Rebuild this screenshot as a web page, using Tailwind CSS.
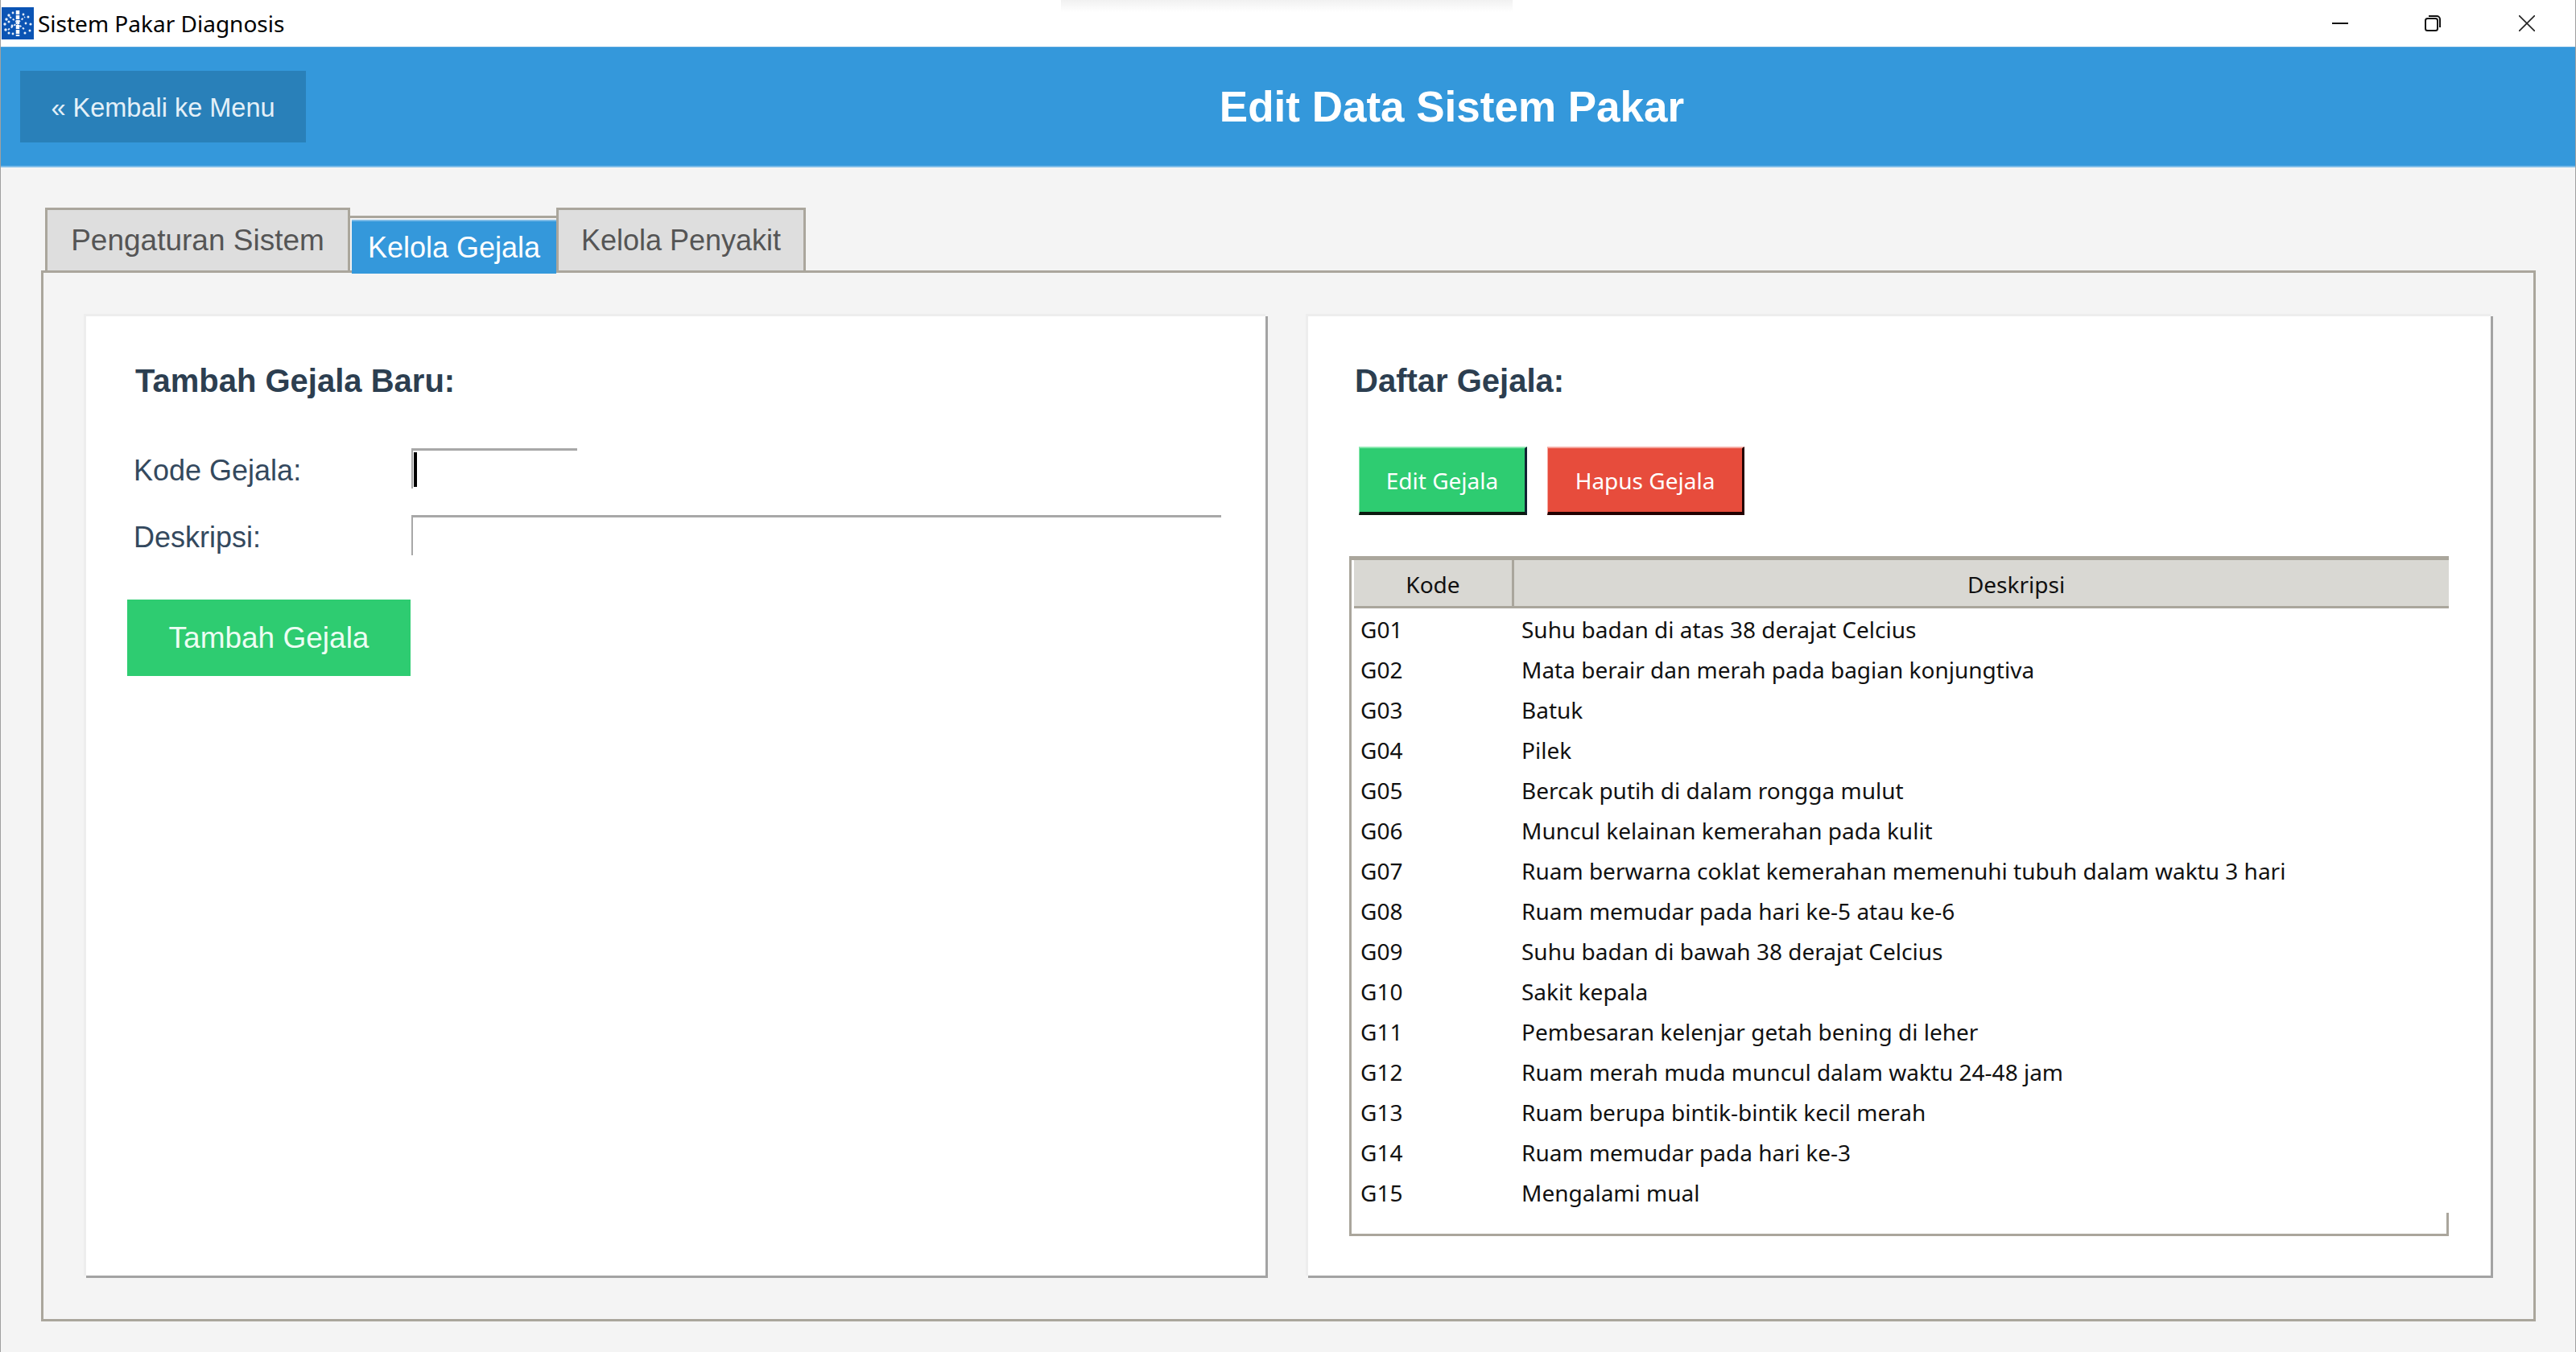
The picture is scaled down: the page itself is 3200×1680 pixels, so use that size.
<!DOCTYPE html>
<html lang="en">
<head>
    <meta charset="UTF-8">
    <title>Sistem Pakar Diagnosis</title>
    <script src="https://cdn.jsdelivr.net/npm/@tailwindcss/browser@4"></script>
</head>
<body class="bg-[#f4f4f4] font-['Liberation_Sans',sans-serif]">
<div class="relative w-[3200px] h-[1680px] overflow-hidden border-x border-[#a0a0a0] flex flex-col">

    <!-- title bar -->
    <div class="h-[58px] shrink-0 bg-white flex items-center font-['Noto_Sans',sans-serif]">
        <svg class="ml-[1px] w-[40px] h-[40px] mb-[1px]" viewBox="0 0 40 40">
            <rect width="40" height="40" fill="#0b54b4"/>
            <path d="M20 4v32" stroke="#fff" stroke-width="4.5" fill="none" stroke-dasharray="5 1"/>
            <path d="M10 12l10 7 9-7M8 28l11-8 10 8" stroke="#dfe9f8" stroke-width="2" fill="none" stroke-dasharray="2.5 2"/>
            <g fill="#e8f0fb">
                <circle cx="6" cy="15" r="1.7"/><circle cx="9" cy="10" r="1.7"/><circle cx="14" cy="7" r="1.4"/><circle cx="4" cy="21" r="1.7"/>
                <circle cx="9" cy="18" r="1.5"/><circle cx="5" cy="28" r="1.7"/><circle cx="9" cy="32" r="1.5"/><circle cx="14" cy="33" r="1.4"/>
                <circle cx="27" cy="9" r="1.4"/><circle cx="33" cy="12" r="1.5"/><circle cx="36" cy="21" r="1.6"/><circle cx="30" cy="20" r="1.4"/>
                <circle cx="35" cy="29" r="1.5"/><circle cx="29" cy="32" r="1.5"/><circle cx="13" cy="23" r="1.4"/>
            </g>
        </svg>
        <span class="ml-[5px] text-[28px] text-black leading-none mb-[1px]">Sistem Pakar Diagnosis</span>
        <div class="ml-auto flex items-center pr-[50px]">
            <svg class="w-[20px] h-[20px]" viewBox="0 0 20 20"><path d="M0 10h20" stroke="#111" stroke-width="2"/></svg>
            <svg class="ml-[95px] w-[20px] h-[20px]" viewBox="0 0 20 20" fill="none" stroke="#111" stroke-width="2"><rect x="1" y="4" width="15" height="15" rx="2.5"/><path d="M5 1h10a4 4 0 0 1 4 4v10"/></svg>
            <svg class="ml-[97px] w-[20px] h-[20px]" viewBox="0 0 20 20"><path d="M0 0l20 20M20 0L0 20" stroke="#222" stroke-width="1.6"/></svg>
        </div>
    </div>

    <!-- window shadow leaking from top -->
    <div class="absolute left-[1317px] top-0 w-[561px] h-[15px] bg-gradient-to-b from-[#f1f1f1] to-white"></div>

    <!-- header -->
    <div class="h-[150px] shrink-0 bg-[#3498db] border-t border-b-2 border-t-[#5aa6de] border-b-[#7dbce8] flex items-center pl-[24px]">
        <a class="w-[355px] h-[89px] bg-[#2980b9] text-[#e4f0f8] text-[32.5px] pt-[3px] flex items-center justify-center">« Kembali ke Menu</a>
        <h1 class="flex-1 pl-[28px] text-center text-white font-bold text-[53px]">Edit Data Sistem Pakar</h1>
    </div>

    <!-- tabs -->
    <div class="flex-1 pt-[50px] pl-[50px] pr-[50px]">
        <div class="flex items-start h-[78px] pl-[5px] text-[36px]">
            <div class="w-[379px] h-[78px] bg-[#dedede] border-x-3 border-t-3 border-[#aaa69c] text-[#555] text-[37px] flex items-center justify-center">Pengaturan Sistem</div>
            <div class="relative z-10 w-[256px] h-[82px] pt-[10px]">
                <div class="border-t-3 border-[#aaa69c] h-[5px]"></div>
                <div class="ml-[2px] h-[67px] bg-[#3498db] border-t-2 border-[#7dbce8] text-white flex items-center justify-center">Kelola Gejala</div>
            </div>
            <div class="w-[310px] h-[78px] bg-[#dedede] border-x-3 border-t-3 border-[#aaa69c] text-[#555] flex items-center justify-center">Kelola Penyakit</div>
        </div>

        <!-- pane -->
        <div class="w-[3099px] h-[1306px] border-3 border-[#aaa69c] pt-[51px] pl-[50px] flex">
            <!-- left card -->
            <div class="w-[1468px] h-[1195px] bg-white border-l-3 border-t-3 border-[#ededed] shadow-[3px_3px_0_#a3a3a3] pl-[61px] pt-[57px] text-[#34495e]">
                <h2 class="font-bold text-[40px] text-[#2c3e50] leading-[46px]">Tambah Gejala Baru:</h2>
                <div class="mt-[61px] -ml-[2px] flex items-center h-[50px]">
                    <span class="w-[345px] text-[36px] pt-[6px]">Kode Gejala:</span>
                    <div class="w-[206px] h-[50px] border-t-3 border-l-2 border-[#a8a8a8] pl-[1px] pt-[2px]">
                        <div class="w-[4px] h-[43px] bg-black"></div>
                    </div>
                </div>
                <div class="mt-[33px] -ml-[2px] flex items-center h-[50px]">
                    <span class="w-[345px] text-[36px] pt-[6px]">Deskripsi:</span>
                    <div class="w-[1006px] h-[50px] border-t-3 border-l-2 border-[#a8a8a8]"></div>
                </div>
                <button class="mt-[55px] -ml-[10px] block w-[352px] h-[95px] bg-[#2ecc71] text-[#ecfdf3] text-[37px]">Tambah Gejala</button>
            </div>

            <!-- right card -->
            <div class="ml-[50px] w-[1472px] h-[1195px] bg-white border-l-3 border-t-3 border-[#ededed] shadow-[3px_3px_0_#a3a3a3] pl-[58px] pt-[57px]">
                <h2 class="font-bold text-[40px] text-[#2c3e50] leading-[46px]">Daftar Gejala:</h2>
                <div class="mt-[59px] ml-[5px] flex gap-[25px] font-['Noto_Sans',sans-serif] text-[28px] text-white">
                    <button class="w-[209px] h-[85px] bg-[#2ecc71] border-t-2 border-l border-r-3 border-b-4 border-t-[#8ae8b0] border-l-[#8ae8b0] border-r-[#123] border-b-[#0c1a10]">Edit Gejala</button>
                    <button class="w-[245px] h-[85px] bg-[#e74c3c] border-t-2 border-l border-r-3 border-b-4 border-t-[#f5a8a0] border-l-[#f5a8a0] border-r-[#200] border-b-[#200]">Hapus Gejala</button>
                </div>

                <!-- table -->
                <div class="relative mt-[51px] -ml-[7px] w-[1366px] h-[845px] border-t-5 border-l-3 border-b-3 border-[#aaa69c] font-['Noto_Sans',sans-serif] text-[28px] text-[#111]">
                    <div class="absolute right-0 bottom-0 w-[3px] h-[26px] bg-[#aaa69c]"></div>
                    <div class="flex h-[60px] ml-[3px] bg-[#d9d8d3] border-b-3 border-[#aaa69c] text-center">
                        <div class="w-[199px] pt-[2px] border-r-3 border-[#aaa69c] flex items-center justify-center">Kode</div>
                        <div class="flex-1 pl-[86px] pt-[2px] flex items-center justify-center">Deskripsi</div>
                    </div>
                    <div class="pt-[1px]">
                    <div class="flex h-[50px] items-center"><span class="w-[211px] pl-[11px]">G01</span><span>Suhu badan di atas 38 derajat Celcius</span></div>
                    <div class="flex h-[50px] items-center"><span class="w-[211px] pl-[11px]">G02</span><span>Mata berair dan merah pada bagian konjungtiva</span></div>
                    <div class="flex h-[50px] items-center"><span class="w-[211px] pl-[11px]">G03</span><span>Batuk</span></div>
                    <div class="flex h-[50px] items-center"><span class="w-[211px] pl-[11px]">G04</span><span>Pilek</span></div>
                    <div class="flex h-[50px] items-center"><span class="w-[211px] pl-[11px]">G05</span><span>Bercak putih di dalam rongga mulut</span></div>
                    <div class="flex h-[50px] items-center"><span class="w-[211px] pl-[11px]">G06</span><span>Muncul kelainan kemerahan pada kulit</span></div>
                    <div class="flex h-[50px] items-center"><span class="w-[211px] pl-[11px]">G07</span><span>Ruam berwarna coklat kemerahan memenuhi tubuh dalam waktu 3 hari</span></div>
                    <div class="flex h-[50px] items-center"><span class="w-[211px] pl-[11px]">G08</span><span>Ruam memudar pada hari ke-5 atau ke-6</span></div>
                    <div class="flex h-[50px] items-center"><span class="w-[211px] pl-[11px]">G09</span><span>Suhu badan di bawah 38 derajat Celcius</span></div>
                    <div class="flex h-[50px] items-center"><span class="w-[211px] pl-[11px]">G10</span><span>Sakit kepala</span></div>
                    <div class="flex h-[50px] items-center"><span class="w-[211px] pl-[11px]">G11</span><span>Pembesaran kelenjar getah bening di leher</span></div>
                    <div class="flex h-[50px] items-center"><span class="w-[211px] pl-[11px]">G12</span><span>Ruam merah muda muncul dalam waktu 24-48 jam</span></div>
                    <div class="flex h-[50px] items-center"><span class="w-[211px] pl-[11px]">G13</span><span>Ruam berupa bintik-bintik kecil merah</span></div>
                    <div class="flex h-[50px] items-center"><span class="w-[211px] pl-[11px]">G14</span><span>Ruam memudar pada hari ke-3</span></div>
                    <div class="flex h-[50px] items-center"><span class="w-[211px] pl-[11px]">G15</span><span>Mengalami mual</span></div>
                    </div>
                </div>
            </div>
        </div>
    </div>
</div>
</body>
</html>
